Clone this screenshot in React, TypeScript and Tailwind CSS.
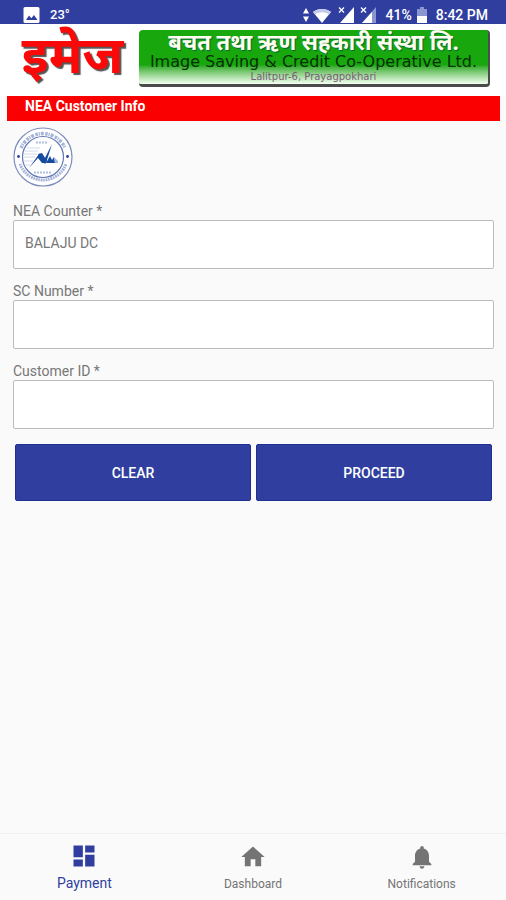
import React, { useState } from "react";

const deva = "font-['Noto_Sans_Devanagari','Noto_Sans','Lohit_Devanagari','FreeSans',sans-serif]";

function Signal({ muted }: { muted?: boolean }) {
  return (
    <svg viewBox="0 0 17 18" className="h-[18px] w-[17px]" aria-hidden="true">
      <path d="M16 1V17H2Z" fill={muted ? "#8b95cf" : "#fff"} />
      {muted && <path d="M12 6V17H2Z" fill="#fff" />}
      <path d="M0 0H8V7H0Z" fill="#303f9f" />
      <path d="M1 1.500 6 6.500M6 1.500 1 6.500" stroke="#fff" strokeWidth="1.300" />
    </svg>
  );
}

function StatusBar() {
  return (
    <div className="flex h-6 items-end justify-between bg-[#303f9f] pr-[18px] pl-[23px] text-[14px] font-medium leading-[18px] text-white">
      <div className="flex items-end gap-[10px]">
        <svg viewBox="0 0 17 17" className="h-[17px] w-[17px]" aria-hidden="true">
          <rect x="0.5" y="0" width="16" height="16" rx="1.5" fill="#fff" />
          <path d="M3 13 6 8.500l2.300 2.700L11 8l3.500 5Z" fill="#303f9f" />
        </svg>
        <span className="text-[13px]">23°</span>
      </div>
      <div className="flex items-end">
        <svg viewBox="0 0 6 16" className="mr-[4px] h-[18px] w-[6px]" aria-hidden="true">
          <path d="M3 1 6 6.500H0ZM3 15 0 9.500H6Z" fill="#fff" />
        </svg>
        <svg viewBox="0 0 18 16" className="mr-[7px] h-[17px] w-[18px]" aria-hidden="true">
          <path d="M0 4.500C5 .5 13 .5 18 4.500L9 15.500Z" fill="#fff" />
          <path d="M0 4.500C5 .5 13 .5 18 4.500L16 7C12 4 6 4 2 7Z" fill="#c3c9ea" />
        </svg>
        <Signal />
        <span className="w-[5px]" />
        <Signal muted />
        <span className="ml-[9px]">41%</span>
        <svg viewBox="0 0 10 17" className="mr-[9px] ml-[5px] h-[17px] w-[10px]" aria-hidden="true">
          <path d="M3 0H7V2H10V9H0V2H3Z" fill="#8b95cf" />
          <path d="M0 9H10V16H0Z" fill="#fff" />
        </svg>
        <span>8:42 PM</span>
      </div>
    </div>
  );
}

function Banner() {
  return (
    <header className="flex h-[72px] items-start bg-white pt-[6px] pr-4 pl-[14px]">
      <div
        className={`${deva} w-[125px] pr-2 text-center whitespace-nowrap text-[52px] font-bold leading-[60px] text-[#fb0808] [text-shadow:2px_2px_1px_#555]`}
      >
        इमेज
      </div>
      <div className="h-[57px] flex-1 overflow-hidden rounded-[4px] border-r-2 border-b-[3px] border-[#4b4b4b] bg-linear-to-b from-[#18a80d] from-65% to-[#f4fff2] text-center whitespace-nowrap">
        <div className={`${deva} h-[22px] text-[22px] font-bold leading-[30px] text-[#fffdf0] [text-shadow:1px_1px_1px_#063]`}>
          बचत तथा ऋण सहकारी संस्था लि.
        </div>
        <div className="h-[18px] font-['DejaVu_Sans','Open_Sans',sans-serif] text-[16px] leading-[20px] text-[#052f05]">
          Image Saving &amp; Credit Co-Operative Ltd.
        </div>
        <div className="font-['DejaVu_Sans',sans-serif] text-[10px] leading-[14px] text-[#7b5b7b]">
          Lalitpur-6, Prayagpokhari
        </div>
      </div>
    </header>
  );
}

function Seal() {
  return (
    <svg viewBox="0 0 60 60" className="block h-[60px] w-[60px]" role="img" aria-label="NEA">
      <circle cx="30" cy="30" r="29" fill="#fff" stroke="#7b8cbd" strokeWidth="1.200" />
      <circle cx="30" cy="30" r="20.500" fill="none" stroke="#6379b5" strokeWidth="1.200" />
      <path d="M8 21A24 24 0 0 1 52 21" fill="none" stroke="#a5b3d7" strokeWidth="3.500" strokeDasharray="2.500 .8 1.200 1 3 1.500" />
      <path d="M7 37A24.500 24.500 0 0 0 53 37" fill="none" stroke="#a5b3d7" strokeWidth="3" strokeDasharray="1.500 .8 2 .7" />
      <circle cx="5.500" cy="29.500" r="1.400" fill="#2f3f9c" />
      <circle cx="54.500" cy="29.500" r="1.400" fill="#2f3f9c" />
      <path d="M14 21H27M12 24H25M11 27H24M11 30H22M11 34H20M13 38H17" stroke="#c5cfe6" strokeWidth=".8" />
      <path d="M23 15.500H35M21 45.500H38" stroke="#b0bfde" strokeWidth="1.800" strokeDasharray="2 1" />
      <path d="M16 41 26 27 31 33 39 17 33 36H29L25 31Z" fill="#174b9f" />
      <path d="m25 27 4-1 5 8-2 3Z" fill="#174b9f" />
      <path d="m33 36 4-7 2 4 2-3 1 6Z" fill="#174b9f" />
      <path d="m41 30 4 4v2h-3Z" fill="#9db9de" />
    </svg>
  );
}

type FieldProps = { id: string; label: string; value: string; onChange: (v: string) => void };

function Field({ id, label, value, onChange }: FieldProps) {
  return (
    <div className="mb-[13px]">
      <label htmlFor={id} className="block h-[18px] text-[14px] leading-[18px] text-[#777]">
        {label}
      </label>
      <input
        id={id}
        value={value}
        onChange={(e) => onChange(e.target.value)}
        className="block h-[49px] w-full rounded-[2px] border border-[#bcbcbc] bg-white px-[11px] pb-1 text-[14px] text-[#777] outline-none"
      />
    </div>
  );
}

const action =
  "h-[57px] flex-1 rounded-[2px] border border-[#1f2f94] bg-[#303f9f] pt-[2px] text-[14px] font-medium text-white";

export default function App() {
  const [counter, setCounter] = useState("BALAJU DC");
  const [sc, setSc] = useState("");
  const [customer, setCustomer] = useState("");

  const clear = () => {
    setSc("");
    setCustomer("");
  };

  return (
    <div className="flex min-h-screen flex-col bg-[#fafafa] font-['Roboto',sans-serif]">
      <StatusBar />
      <Banner />
      <main className="flex-1">
        <h1 className="mr-[6px] ml-[7px] h-[25px] bg-[#fb0000] pl-[18px] text-[14px] font-bold leading-[21px] text-white">
          NEA Customer Info
        </h1>
        <form className="pt-[6px] pr-3 pl-[13px]" onSubmit={(e) => e.preventDefault()}>
          <div className="mb-[15px]">
            <Seal />
          </div>
          <Field id="counter" label="NEA Counter *" value={counter} onChange={setCounter} />
          <Field id="sc" label="SC Number *" value={sc} onChange={setSc} />
          <Field id="customer" label="Customer ID *" value={customer} onChange={setCustomer} />
          <div className="flex gap-[5px] px-[2px] pt-[2px]">
            <button type="button" onClick={clear} className={action}>
              CLEAR
            </button>
            <button type="submit" className={action}>
              PROCEED
            </button>
          </div>
        </form>
      </main>
      <nav className="grid h-[67px] grid-cols-3 border-t border-[#f0f0f0] text-center">
        <a href="#payment" className="flex flex-col items-center gap-[4px] pt-[8px] text-[14px] leading-[18px] text-[#303f9f]">
          <svg viewBox="0 0 24 24" className="h-7 w-7" fill="currentColor" aria-hidden="true">
            <path d="M3 13h8V3H3v10zm0 8h8v-6H3v6zm10 0h8V11h-8v10zm0-18v6h8V3h-8z" />
          </svg>
          Payment
        </a>
        <a href="#dashboard" className="flex flex-col items-center gap-[4px] pt-[9px] text-[12px] leading-[18px] text-[#747474]">
          <svg viewBox="0 0 24 24" className="h-7 w-7" fill="currentColor" aria-hidden="true">
            <path d="M10 20v-6h4v6h5v-8h3L12 3 2 12h3v8z" />
          </svg>
          Dashboard
        </a>
        <a href="#notifications" className="flex flex-col items-center gap-[4px] pt-[9px] text-[12px] leading-[18px] text-[#747474]">
          <svg viewBox="0 0 24 24" className="h-7 w-7" fill="currentColor" aria-hidden="true">
            <path d="M12 22c1.100 0 2-.9 2-2h-4c0 1.100.89 2 2 2zm6-6v-5c0-3.070-1.640-5.640-4.500-6.320V4c0-.83-.67-1.500-1.500-1.500s-1.500.67-1.500 1.500v.68C7.630 5.360 6 7.920 6 11v5l-2 2v1h16v-1l-2-2z" />
          </svg>
          Notifications
        </a>
      </nav>
    </div>
  );
}
